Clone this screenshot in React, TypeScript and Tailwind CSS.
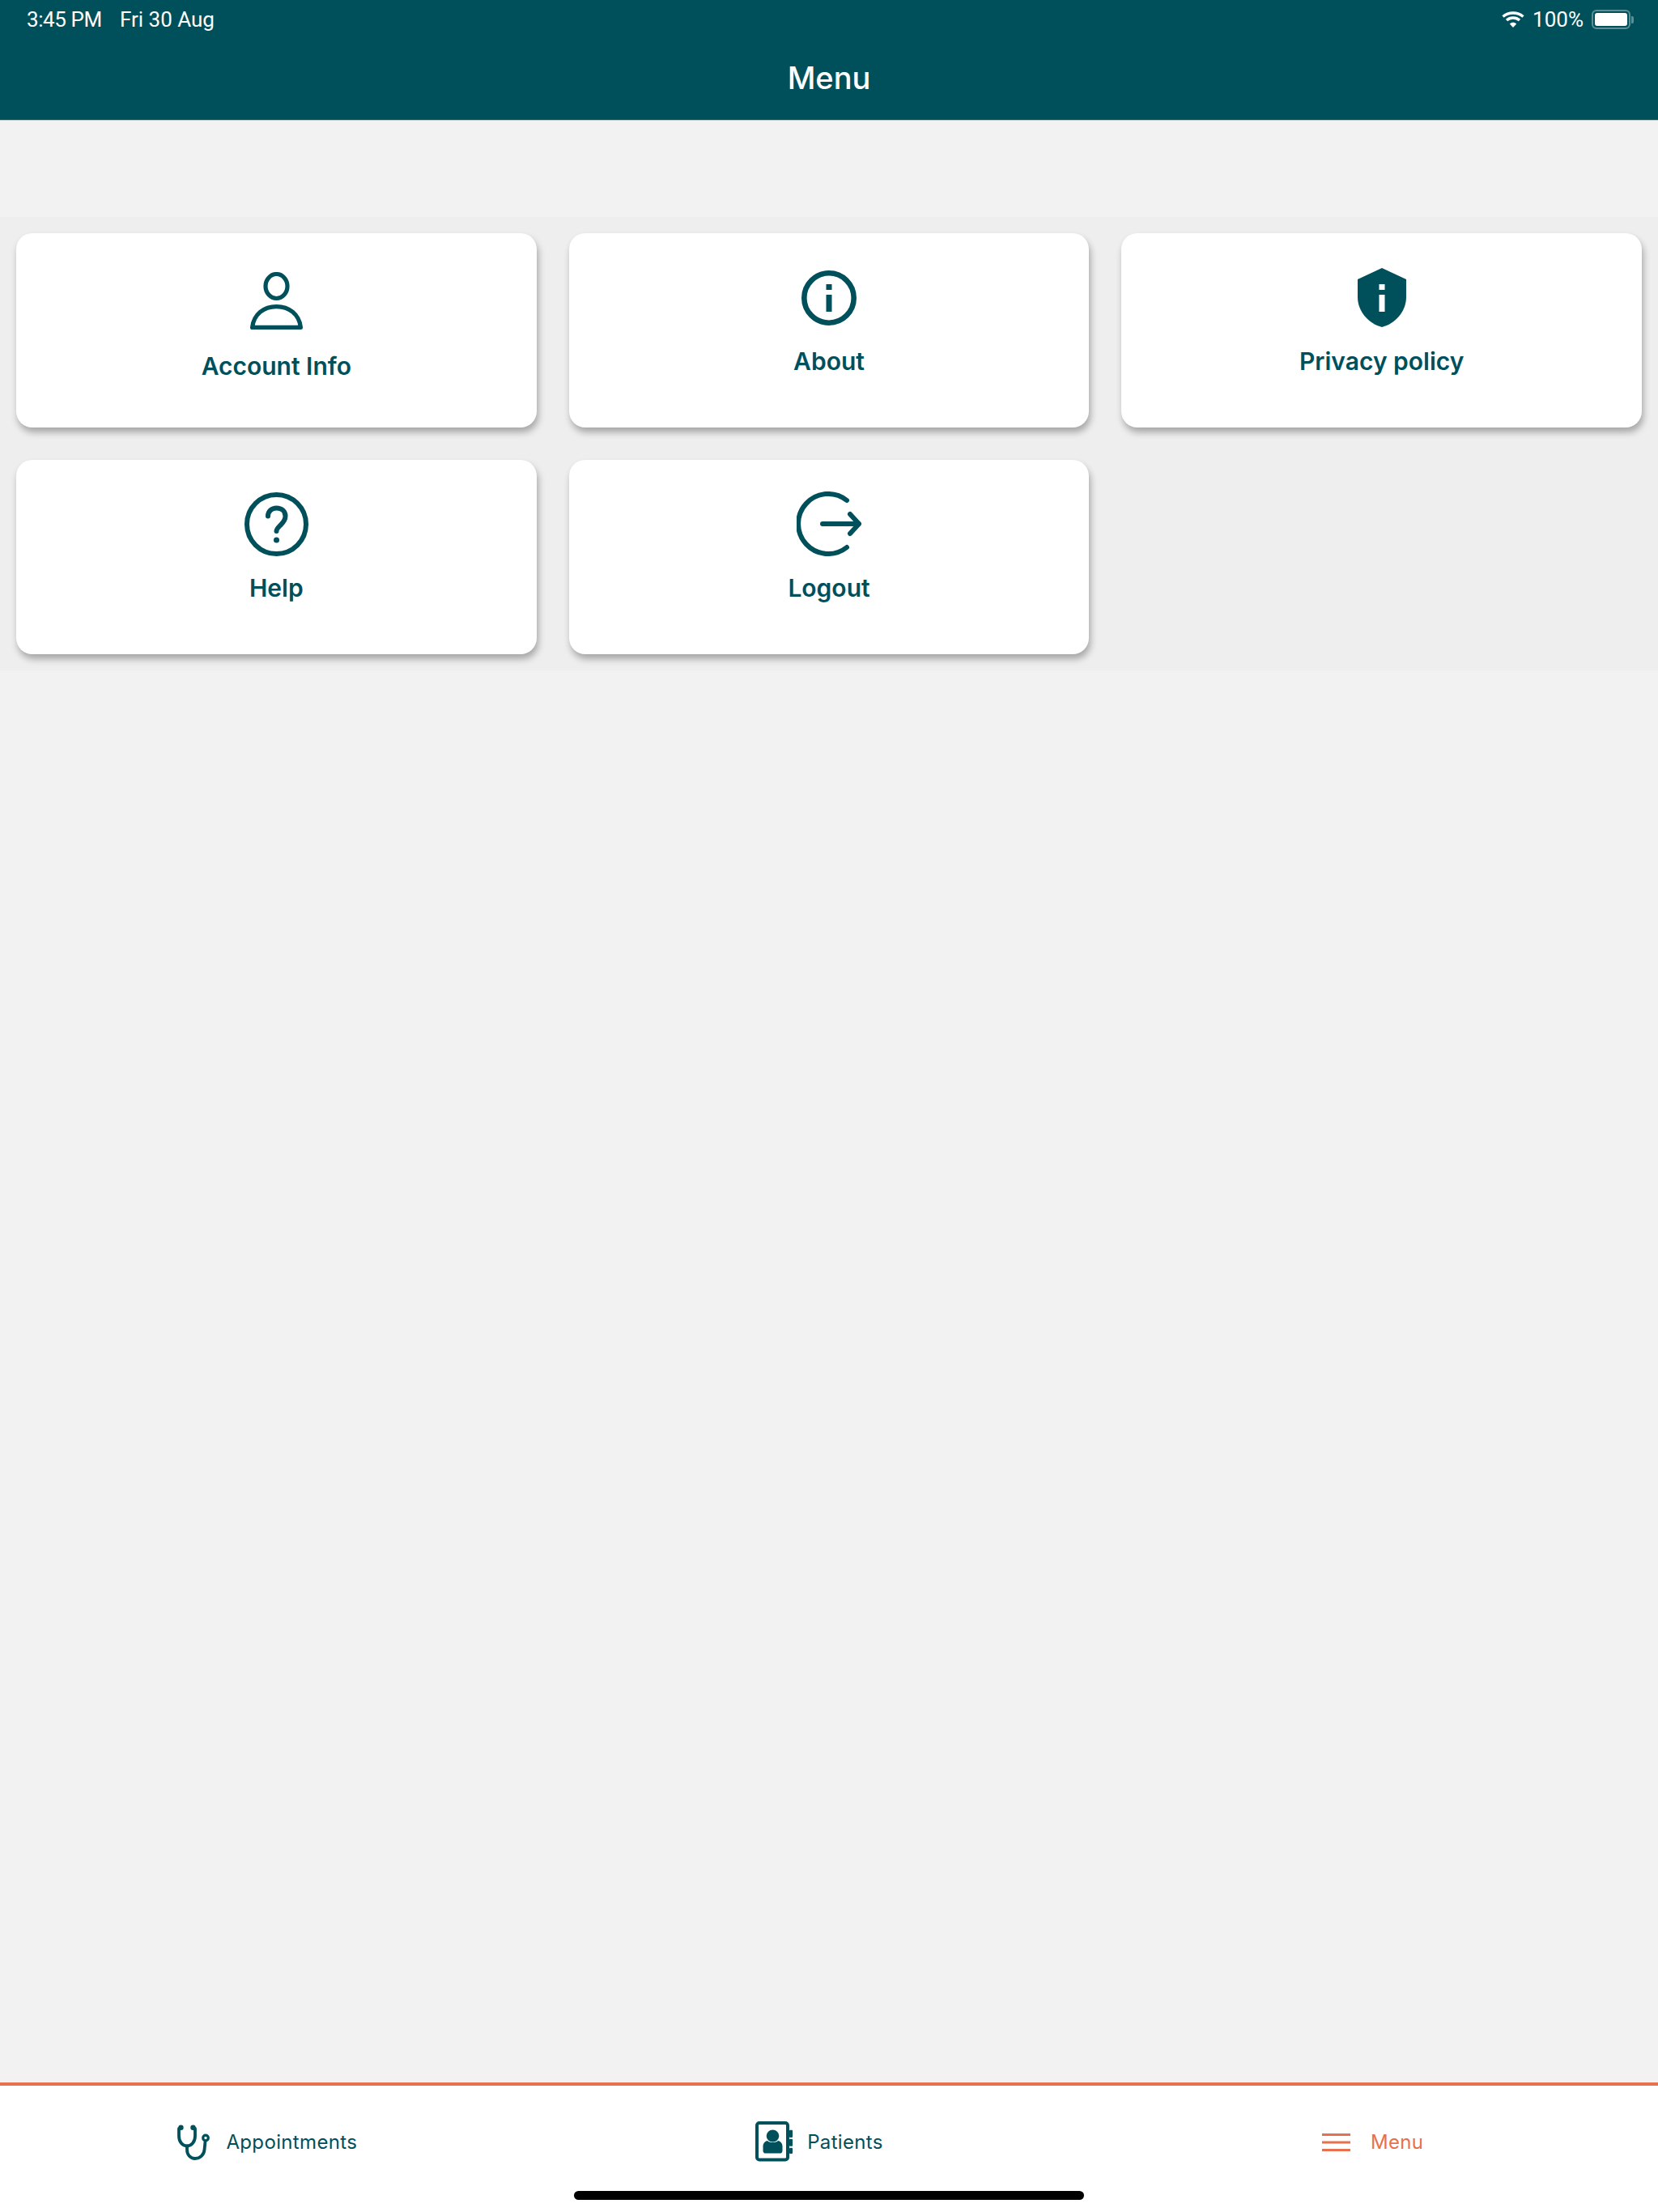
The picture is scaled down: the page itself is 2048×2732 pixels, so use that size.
import React from "react";

const TEAL = "#00505c";

function UserIcon() {
  return (
    <svg width="65" height="71" viewBox="0 0 65 71" fill="none" stroke={TEAL} strokeWidth="5.2" strokeLinejoin="round" strokeLinecap="round">
      <ellipse cx="32.500" cy="17.500" rx="13.500" ry="15" />
      <path d="M2.600 68.400C4.500 52 17 42.600 32.500 42.600C48 42.600 60.500 52 62.400 68.400Z" />
    </svg>
  );
}
function InfoIcon() {
  return (
    <svg width="68" height="68" viewBox="0 0 68 68" fill="none">
      <circle cx="34" cy="34" r="30.700" stroke={TEAL} strokeWidth="6.600" />
      <rect x="30.500" y="17" width="7" height="7" fill={TEAL} />
      <rect x="30.500" y="30" width="7" height="21" fill={TEAL} />
    </svg>
  );
}
function ShieldIcon() {
  return (
    <svg width="60" height="73" viewBox="0 0 60 73">
      <path fill={TEAL} d="M30 0L60 14V36C60 54 46 69 30 73C14 69 0 54 0 36V14Z" />
      <rect x="26.500" y="20" width="7" height="7" fill="#fff" />
      <rect x="26.500" y="33" width="7" height="21" fill="#fff" />
    </svg>
  );
}
function HelpIcon() {
  return (
    <svg width="79" height="79" viewBox="0 0 79 79" fill="none" stroke={TEAL} strokeWidth="6" strokeLinecap="round" strokeLinejoin="round">
      <circle cx="39.500" cy="39.500" r="36.500" />
      <path d="M29 29.500C29 23.500 33.500 19.500 39.500 19.500C46 19.500 50.500 23.500 50.500 29.500C50.500 35 47 38 44 41C41.500 43.500 39.500 45.500 39.500 48" />
      <circle cx="39.500" cy="59" r="3.500" fill={TEAL} stroke="none" />
    </svg>
  );
}
function LogoutIcon() {
  return (
    <svg width="80" height="80" viewBox="0 0 80 80" fill="none" stroke={TEAL} strokeWidth="6" strokeLinecap="round" strokeLinejoin="round">
      <path d="M62 11A37 37 0 1 0 62 69" />
      <path d="M32 40H76.500" />
      <path d="M66 28L77 40L66 52" />
    </svg>
  );
}
function StethoscopeIcon() {
  return (
    <svg width="40" height="44" viewBox="0 0 40 44" fill="none" stroke={TEAL} strokeWidth="3.800" strokeLinecap="round" strokeLinejoin="round">
      <path d="M2 5V14C2 21.500 6.500 26.500 12 26.500C17.500 26.500 22 21.500 22 14V5" />
      <circle cx="4.500" cy="3.700" r="3.200" fill={TEAL} stroke="none" />
      <circle cx="19.500" cy="3.700" r="3.200" fill={TEAL} stroke="none" />
      <path d="M12 26.500V31C12 37.500 16.500 42 22 42C28 42 33 37.500 33.500 31L34.500 21" />
      <circle cx="35" cy="16.500" r="3.300" strokeWidth="3.200" />
    </svg>
  );
}
function PatientsIcon() {
  return (
    <svg width="46" height="50" viewBox="0 0 46 50" className="mb-[3px]">
      <rect x="2" y="2" width="38" height="45.500" rx="3" fill="none" stroke={TEAL} strokeWidth="4" />
      <ellipse cx="21.500" cy="18" rx="7.800" ry="7.500" fill={TEAL} />
      <path fill={TEAL} d="M9.500 36V31C9.500 27 12 24.500 15 24C17 26.800 26 26.800 28 24C31 24.500 33.500 27 33.500 31V36C33.500 38 32.500 39.500 31 39.500H12C10.500 39.500 9.500 38 9.500 36Z" />
      <rect x="42" y="10.700" width="4" height="9.300" rx="1" fill={TEAL} />
      <rect x="42" y="21.700" width="4" height="9" rx="1" fill={TEAL} />
      <rect x="42" y="32.700" width="4" height="7.300" rx="1" fill={TEAL} />
    </svg>
  );
}
function MenuIcon() {
  return (
    <svg width="35" height="22" viewBox="0 0 35 22" fill="#e8704d">
      <rect y="0" width="35" height="3" />
      <rect y="9.500" width="35" height="3" />
      <rect y="19" width="35" height="3" />
    </svg>
  );
}
function WifiIcon() {
  return (
    <svg width="28" height="20" viewBox="0 0 28 20" fill="none" stroke="#fff" strokeWidth="3.400">
      <path d="M1.500 6.500C8.500 0.500 19.500 0.500 26.500 6.500" />
      <path d="M6 11C10.500 7 17.500 7 22 11" />
      <path d="M14 20L9.800 15.500C12.300 13.300 15.700 13.300 18.200 15.500Z" fill="#fff" stroke="none" />
    </svg>
  );
}
function Battery() {
  return (
    <div className="flex items-center">
      <div className="w-[48px] h-[24px] rounded-[6px] border-2 border-[#5f8e95] p-[2px]">
        <div className="w-full h-full rounded-[3px] bg-white" />
      </div>
      <div className="w-[3px] h-[9px] ml-[1px] rounded-r-[2px] bg-[#5f8e95]" />
    </div>
  );
}

const cards: { label: string; icon: React.ReactNode; pad: string; gap: string }[] = [
  { label: "Account Info", icon: <UserIcon />, pad: "pt-[48px]", gap: "mt-[27px]" },
  { label: "About", icon: <InfoIcon />, pad: "pt-[46px]", gap: "mt-[26px]" },
  { label: "Privacy policy", icon: <ShieldIcon />, pad: "pt-[43px]", gap: "mt-[24px]" },
  { label: "Help", icon: <HelpIcon />, pad: "pt-[40px]", gap: "mt-[21px]" },
  { label: "Logout", icon: <LogoutIcon />, pad: "pt-[39px]", gap: "mt-[21px]" },
];

export default function App() {
  return (
    <div
      className="w-[2048px] h-[2732px] flex flex-col bg-[#f2f2f2] overflow-hidden"
      style={{ fontFamily: "Inter, 'Noto Sans', sans-serif" }}
    >
      <header className="h-[149px] shrink-0 bg-[#00505c] border-b border-[#b9c6c8] text-white flex flex-col">
        <div className="h-[48px] flex items-center justify-between pl-[33px] pr-[30px] text-[26px] leading-none" style={{ fontFamily: "Roboto, sans-serif" }}>
          <div className="flex gap-[22px]">
            <span className="tracking-[-0.4px]">3:45 PM</span>
            <span>Fri 30 Aug</span>
          </div>
          <div className="flex items-center gap-[10px]">
            <WifiIcon />
            <span>100%</span>
            <Battery />
          </div>
        </div>
        <h1 className="mt-[24px] text-center text-[38px] leading-[48px] font-medium">Menu</h1>
      </header>

      <div className="h-[119px] shrink-0" />

      <section className="bg-[#eeeeee] p-[20px] grid grid-cols-3 gap-[40px] shrink-0">
        {cards.map((c) => (
          <div
            key={c.label}
            className={`h-[240px] bg-white rounded-[20px] shadow-[2px_6px_8px_rgba(0,0,0,0.3)] flex flex-col items-center ${c.pad}`}
          >
            {c.icon}
            <div className={`text-[30px] leading-[36px] font-semibold text-[#00505c] ${c.gap}`}>{c.label}</div>
          </div>
        ))}
      </section>

      <div className="flex-1" />

      <nav className="relative h-[160px] shrink-0 bg-white border-t-4 border-[#e8704d] grid grid-cols-3 pb-[16px] text-[24px] tracking-[0.35px]">
        <div className="flex items-center justify-center pr-[22px] gap-[20px] text-[#00505c]">
          <StethoscopeIcon />
          <span>Appointments</span>
        </div>
        <div className="flex items-center justify-center pr-[24px] gap-[18px] text-[#00505c]">
          <PatientsIcon />
          <span>Patients</span>
        </div>
        <div className="flex items-center justify-center pr-[22px] gap-[25px] text-[#e8704d]">
          <MenuIcon />
          <span>Menu</span>
        </div>
        <div className="absolute left-[709px] top-[130px] w-[630px] h-[11px] rounded-full bg-black" />
      </nav>
    </div>
  );
}
